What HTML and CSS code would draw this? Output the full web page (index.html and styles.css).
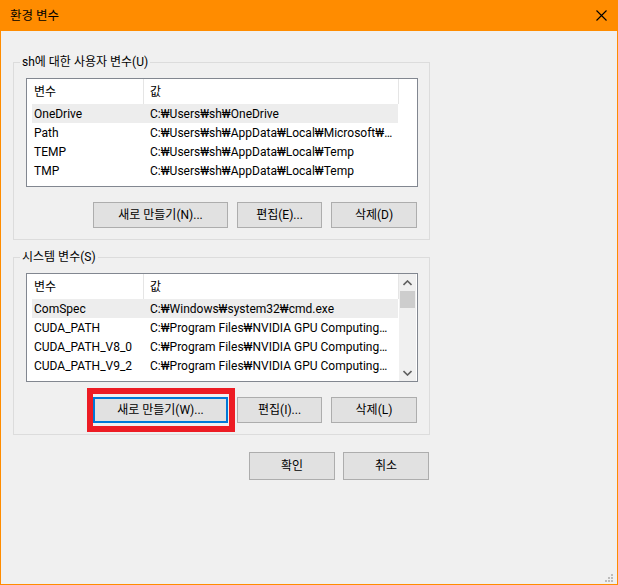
FILE: index.html
```html
<!DOCTYPE html>
<html lang="ko">
<head>
<meta charset="utf-8">
<title>환경 변수</title>
<link rel="stylesheet" href="styles.css">
</head>
<body>
<div class="window">
  <div class="titlebar">
    <span class="title">환경 변수</span>
    <svg class="close" width="11" height="11" viewBox="0 0 11 11"><path d="M0.5 0.5 L10.5 10.5 M10.5 0.5 L0.5 10.5" stroke="#000" stroke-width="1.1" fill="none"/></svg>
  </div>
  <div class="content">
    <fieldset class="group">
      <legend>sh에 대한 사용자 변수(U)</legend>
      <div class="list">
        <div class="listmain">
          <div class="header"><div class="hcol1">변수</div><div class="hcol2">값</div></div>
          <div class="row sel"><div class="c1">OneDrive</div><div class="c2">C:₩Users₩sh₩OneDrive</div></div>
          <div class="row"><div class="c1">Path</div><div class="c2">C:₩Users₩sh₩AppData₩Local₩Microsoft₩WindowsApps;</div></div>
          <div class="row"><div class="c1">TEMP</div><div class="c2">C:₩Users₩sh₩AppData₩Local₩Temp</div></div>
          <div class="row"><div class="c1">TMP</div><div class="c2">C:₩Users₩sh₩AppData₩Local₩Temp</div></div>
        </div>
      </div>
      <div class="buttons">
        <button class="btn wide">새로 만들기(N)...</button>
        <button class="btn mid">편집(E)...</button>
        <button class="btn del">삭제(D)</button>
      </div>
    </fieldset>

    <fieldset class="group second">
      <legend>시스템 변수(S)</legend>
      <div class="list">
        <div class="listmain">
          <div class="header"><div class="hcol1">변수</div><div class="hcol2">값</div></div>
          <div class="row sel"><div class="c1">ComSpec</div><div class="c2">C:₩Windows₩system32₩cmd.exe</div></div>
          <div class="row"><div class="c1">CUDA_PATH</div><div class="c2">C:₩Program Files₩NVIDIA GPU Computing₩Toolkit₩CUDA₩v9.2</div></div>
          <div class="row"><div class="c1">CUDA_PATH_V8_0</div><div class="c2">C:₩Program Files₩NVIDIA GPU Computing₩Toolkit₩CUDA₩v8.0</div></div>
          <div class="row"><div class="c1">CUDA_PATH_V9_2</div><div class="c2">C:₩Program Files₩NVIDIA GPU Computing₩Toolkit₩CUDA₩v9.2</div></div>
          <div class="row partial"><div class="c1">NUMBER_OF_PROCESSORS</div><div class="c2">8</div></div>
        </div>
        <div class="scrollbar">
          <div class="arrow">
            <svg width="9" height="6" viewBox="0 0 9 6"><path d="M0.5 5 L4.5 1 L8.5 5" stroke="#606060" stroke-width="1.6" fill="none"/></svg>
          </div>
          <div class="thumb"></div>
          <div class="track"></div>
          <div class="arrow">
            <svg width="9" height="6" viewBox="0 0 9 6"><path d="M0.5 1 L4.5 5 L8.5 1" stroke="#606060" stroke-width="1.6" fill="none"/></svg>
          </div>
        </div>
      </div>
      <div class="buttons">
        <button class="btn wide focused">새로 만들기(W)...</button>
        <button class="btn mid">편집(I)...</button>
        <button class="btn del">삭제(L)</button>
      </div>
    </fieldset>

    <div class="dialog-buttons">
      <button class="btn ok">확인</button>
      <button class="btn ok">취소</button>
    </div>
  </div>
  <div class="grip">
    <svg width="8" height="8" viewBox="0 0 8 8" fill="#BCBCBC">
      <rect x="6" y="0" width="2" height="2"/>
      <rect x="3" y="3" width="2" height="2"/>
      <rect x="6" y="3" width="2" height="2"/>
      <rect x="0" y="6" width="2" height="2"/>
      <rect x="3" y="6" width="2" height="2"/>
      <rect x="6" y="6" width="2" height="2"/>
    </svg>
  </div>
</div>
</body>
</html>
```
FILE: styles.css
```css
* { box-sizing: border-box; }
html, body { margin: 0; padding: 0; }
body {
  font-family: "Roboto", "Noto Sans CJK KR", sans-serif;
  font-size: 12px;
  line-height: 16px;
  color: #000;
  background: #F0F0F0;
}
.window {
  width: 618px;
  height: 585px;
  background: #F0F0F0;
  border: 1px solid #FF8C00;
  border-top: none;
  display: flex;
  flex-direction: column;
}
.titlebar {
  height: 31px;
  margin: 0 -1px;
  background: #FF8C00;
  display: flex;
  align-items: center;
  justify-content: space-between;
  padding: 0 11px 0 10px;
}
.title {
  font-size: 12.5px;
  line-height: 16px;
}
.close { display: block; }
.content {
  padding: 0 0 0 12px;
  display: flex;
  flex-direction: column;
}
.group {
  margin: 23px 0 0 0;
  width: 417px;
  border: 1px solid #DCDCDC;
  padding: 8px 11px 11px 12px;
  min-width: 0;
}
.group.second { margin-top: 9px; }
.group legend {
  padding: 0 2px;
  margin-left: -6px;
  line-height: 16px;
}
.list {
  width: 392px;
  height: 109px;
  border: 1px solid #828790;
  background: #fff;
  display: flex;
  overflow: hidden;
}
.listmain {
  flex: 1;
  overflow: hidden;
}
.header {
  height: 25px;
  display: flex;
  align-items: center;
}
.hcol1 {
  width: 117px;
  height: 25px;
  padding: 5px 0 0 7px;
  border-right: 1px solid #E5E5E5;
}
.hcol2 {
  width: 255px;
  height: 25px;
  padding: 5px 0 0 6px;
  border-right: 1px solid #E5E5E5;
}
.row {
  height: 19px;
  margin-left: 5px;
  width: 366px;
  display: flex;
  align-items: center;
  white-space: nowrap;
}
.row.sel { background: #EDEDED; }
.row.partial { align-items: flex-start; padding-top: 4px; }
.c1 {
  width: 118px;
  padding-left: 2px;
  flex: none;
  overflow: hidden;
}
.c2 {
  flex: 1;
  min-width: 0;
  overflow: hidden;
  text-overflow: ellipsis;
  padding-right: 2px;
}
.scrollbar {
  width: 17px;
  flex: none;
  background: #F0F0F0;
  display: flex;
  flex-direction: column;
  margin-right: 1px;
}
.arrow {
  height: 17px;
  display: flex;
  align-items: center;
  justify-content: center;
}
.thumb {
  height: 17px;
  margin: 0 1px;
  background: #CDCDCD;
}
.track { flex: 1; }
.buttons {
  display: flex;
  justify-content: flex-end;
  gap: 9px;
  margin-top: 15px;
  margin-right: 1px;
}
.btn {
  font: inherit;
  color: #000;
  background: #E1E1E1;
  border: 1px solid #ADADAD;
  height: 26px;
  padding: 0;
  border-radius: 0;
  text-align: center;
}
.btn.wide { width: 135px; }
.btn.mid { width: 85px; }
.btn.del { width: 86px; }
.btn.focused {
  border: 2px solid #0078D7;
  position: relative;
}
.btn.focused::after {
  content: "";
  position: absolute;
  left: -8px;
  right: -9px;
  top: -11px;
  bottom: -11px;
  border: 6px solid #ED1C24;
}
.dialog-buttons {
  width: 417px;
  display: flex;
  justify-content: flex-end;
  gap: 8px;
  margin-top: 17px;
  padding-right: 1px;
}
.btn.ok {
  width: 86px;
  height: 28px;
}
.grip {
  margin-top: auto;
  align-self: flex-end;
  padding: 0 4px 2px 0;
  line-height: 0;
}
.grip svg { display: block; }
```
